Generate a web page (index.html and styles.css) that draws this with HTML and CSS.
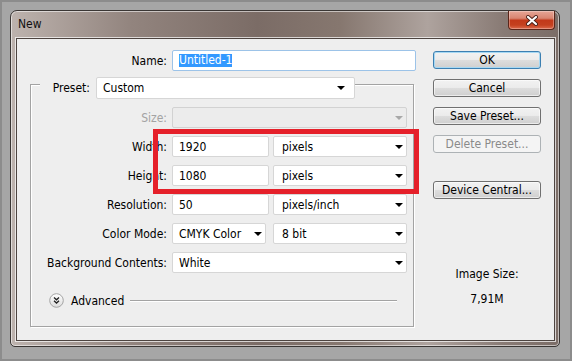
FILE: index.html
```html
<!DOCTYPE html>
<html lang="en">

<head>
    <meta charset="UTF-8">
    <title>New</title>
    <link rel="stylesheet" href="styles.css">
</head>

<body>
    <div class="screen">
        <!-- Janela do diálogo -->
        <div class="window">
            <div class="titlebar">
                <span class="title">New</span>
                <div class="close">
                    <svg width="12" height="11" viewBox="0 0 12 11">
                        <path d="M2 2 L10 9 M10 2 L2 9" stroke="#4a2019" stroke-width="4" stroke-linecap="round"/>
                        <path d="M2 2 L10 9 M10 2 L2 9" stroke="#fff" stroke-width="2.2" stroke-linecap="round"/>
                    </svg>
                </div>
            </div>

            <div class="client">
                <div class="form">
                    <div class="name-row">
                        <span class="label name-label">Name:</span>
                        <div class="field name-field"><span class="selected">Untitled-1</span></div>
                    </div>

                    <div class="group">
                        <div class="preset">
                            <span class="preset-label">Preset:</span>
                            <div class="field select preset-select">Custom<i class="arrow"></i></div>
                        </div>

                        <div class="rows">
                            <div class="row">
                                <span class="label disabled">Size:</span>
                                <div class="field select full off"><i class="arrow"></i></div>
                            </div>
                            <div class="row">
                                <span class="label">Width:</span>
                                <div class="field num">1920</div>
                                <div class="field select unit">pixels<i class="arrow"></i></div>
                            </div>
                            <div class="row">
                                <span class="label">Height:</span>
                                <div class="field num">1080</div>
                                <div class="field select unit">pixels<i class="arrow"></i></div>
                            </div>
                            <div class="row">
                                <span class="label">Resolution:</span>
                                <div class="field num">50</div>
                                <div class="field select unit">pixels/inch<i class="arrow"></i></div>
                            </div>
                            <div class="row">
                                <span class="label">Color Mode:</span>
                                <div class="field select mode">CMYK Color<i class="arrow"></i></div>
                                <div class="field select unit">8 bit<i class="arrow"></i></div>
                            </div>
                            <div class="row">
                                <span class="label">Background Contents:</span>
                                <div class="field select full">White<i class="arrow"></i></div>
                            </div>
                        </div>

                        <div class="advanced">
                            <svg class="adv-icon" width="15" height="15" viewBox="0 0 15 15">
                                <defs>
                                    <linearGradient id="advg" x1="0" y1="0" x2="0" y2="1">
                                        <stop offset="0" stop-color="#ffffff"/>
                                        <stop offset="1" stop-color="#dcdcdc"/>
                                    </linearGradient>
                                </defs>
                                <circle cx="7.5" cy="7.5" r="6.8" fill="url(#advg)" stroke="#a4a4a4"/>
                                <path d="M5 4.5 L7.5 6.8 L10 4.5 M5 7.8 L7.5 10.1 L10 7.8" fill="none" stroke="#222" stroke-width="1.3"/>
                            </svg>
                            <span>Advanced</span>
                            <i class="adv-line"></i>
                        </div>
                    </div>
                </div>

                <!-- Botões laterais -->
                <div class="side">
                    <button class="btn default">OK</button>
                    <button class="btn">Cancel</button>
                    <button class="btn">Save Preset...</button>
                    <button class="btn" disabled>Delete Preset...</button>
                    <button class="btn device">Device Central...</button>
                    <div class="size-label">Image Size:</div>
                    <div class="size-value">7,91M</div>
                </div>
            </div>
        </div>

        <!-- Marcação vermelha -->
        <div class="mark"></div>
    </div>
</body>

</html>
```

FILE: styles.css
```css
body {
    margin: 0;
    font-family: 'DejaVu Sans Condensed', 'DejaVu Sans', sans-serif;
    font-size: 12px;
    color: #000;
}

/* Fundo cinza em volta da janela */
.screen {
    position: relative;
    width: 572px;
    height: 361px;
    box-sizing: border-box;
    border: 2px solid #8c8c8c;
    padding: 8px;
    background-color: #a6a6a6;
}

/* Janela */
.window {
    width: 550px;
    height: 337px;
    box-sizing: border-box;
    border: 1px solid #3a3634;
    border-radius: 7px 7px 5px 5px;
    padding: 0 4px 5px 5px;
    background: linear-gradient(90deg, #bdb3ae 0%, #92847e 22%, #7b6c66 45%, #86776f 60%, #aea39e 76%, #887a74 90%, #7b6d67 100%);
    box-shadow: inset 0 0 0 1px rgba(255, 255, 255, 0.55);
}

.titlebar {
    height: 27px;
    display: flex;
    justify-content: space-between;
    align-items: flex-start;
}

.title {
    line-height: 27px;
    padding-left: 2px;
    font-size: 12px;
    color: #111;
}

.close {
    width: 47px;
    height: 19px;
    box-sizing: border-box;
    border: 1px solid #5a2519;
    border-top: none;
    border-radius: 0 0 4px 4px;
    background: linear-gradient(#e6a596 0%, #d98571 40%, #c2391a 52%, #c4401f 78%, #dc6a4c 100%);
    box-shadow: inset 0 0 0 1px rgba(255, 255, 255, 0.3);
    display: flex;
    align-items: center;
    justify-content: center;
}

/* Área do cliente */
.client {
    height: 303px;
    box-sizing: border-box;
    border: 1px solid #4d4440;
    background-color: #eeeeee;
    box-shadow: 0 0 0 1px rgba(255, 255, 255, 0.7);
    display: flex;
}

.form {
    margin-left: 13px;
    width: 384px;
    padding-top: 11px;
}

.label {
    width: 142px;
    box-sizing: border-box;
    padding-right: 5px;
    text-align: right;
    flex-shrink: 0;
    white-space: nowrap;
}

.label.disabled {
    color: #a3a3a3;
}

.name-row {
    display: flex;
    align-items: center;
    height: 21px;
}

.field {
    height: 21px;
    box-sizing: border-box;
    border: 1px solid #d6d6d6;
    border-radius: 2px;
    background-color: #fff;
    padding-left: 6px;
    display: flex;
    align-items: center;
    flex-shrink: 0;
    white-space: nowrap;
}

.name-field {
    width: 244px;
    border-color: #9cc3e8;
}

.selected {
    background-color: #3399ff;
    color: #fff;
    line-height: 13px;
}

.select {
    padding-right: 3px;
}

.arrow {
    margin-left: auto;
    width: 0;
    height: 0;
    border-left: 4px solid transparent;
    border-right: 4px solid transparent;
    border-top: 4px solid #000;
}

/* Caixa de grupo */
.group {
    margin-top: 13px;
    height: 243px;
    box-sizing: border-box;
    border: 1px solid #a3a3a3;
    box-shadow: 1px 1px 0 #fff, inset 1px 1px 0 #fff;
}

.preset {
    margin-top: -8px;
    margin-left: 9px;
    width: fit-content;
    display: flex;
    align-items: center;
    background-color: #eeeeee;
}

.preset-label {
    width: 56px;
    box-sizing: border-box;
    padding-right: 6px;
    text-align: right;
}

.preset-select {
    width: 259px;
    height: 22px;
    padding-right: 9px;
}

.rows {
    margin-top: 8px;
    display: flex;
    flex-direction: column;
    gap: 8px;
}

.row {
    display: flex;
    align-items: center;
}

.row .label {
    width: 141px;
}

.num {
    width: 97px;
}

.unit {
    width: 134px;
    margin-left: 4px;
    padding-left: 8px;
}

.mode {
    width: 94px;
    margin-right: 3px;
}

.full {
    width: 235px;
}

.off {
    background-color: #ececec;
    border-color: #d2d2d2;
}

.off .arrow {
    border-top-color: #a8a8a8;
}

.advanced {
    margin-top: 20px;
    margin-left: 18px;
    margin-right: 16px;
    display: flex;
    align-items: center;
    height: 15px;
}

.advanced span {
    margin-left: 7px;
}

.adv-line {
    flex: 1;
    height: 0;
    margin-left: 6px;
    border-top: 1px solid #a3a3a3;
    border-bottom: 1px solid #fff;
}

/* Coluna de botões */
.side {
    margin-left: 19px;
    width: 108px;
    padding-top: 12px;
    display: flex;
    flex-direction: column;
}

.btn {
    height: 18px;
    margin-bottom: 10px;
    padding: 0;
    border: 1px solid #707070;
    border-radius: 3px;
    background: linear-gradient(#f2f2f2 0%, #ebebeb 49%, #dddddd 51%, #cfcfcf 100%);
    box-shadow: inset 0 0 0 1px rgba(255, 255, 255, 0.6);
    font-family: inherit;
    font-size: 12px;
    color: #000;
}

.btn.default {
    border-color: #3c7fb1;
    box-shadow: inset 0 0 0 1px #a6d8f3;
}

.btn:disabled {
    border-color: #adb2b5;
    background: #f4f4f4;
    color: #8a8a8a;
    box-shadow: none;
    margin-bottom: 28px;
}

.size-label {
    margin-top: 58px;
    text-align: center;
    line-height: 15px;
}

.size-value {
    margin-top: 10px;
    text-align: center;
    line-height: 15px;
}

/* Retângulo vermelho de destaque */
.mark {
    position: absolute;
    left: 151px;
    top: 127px;
    width: 266px;
    height: 65px;
    box-sizing: border-box;
    border: 5px solid #e5202a;
}
```
